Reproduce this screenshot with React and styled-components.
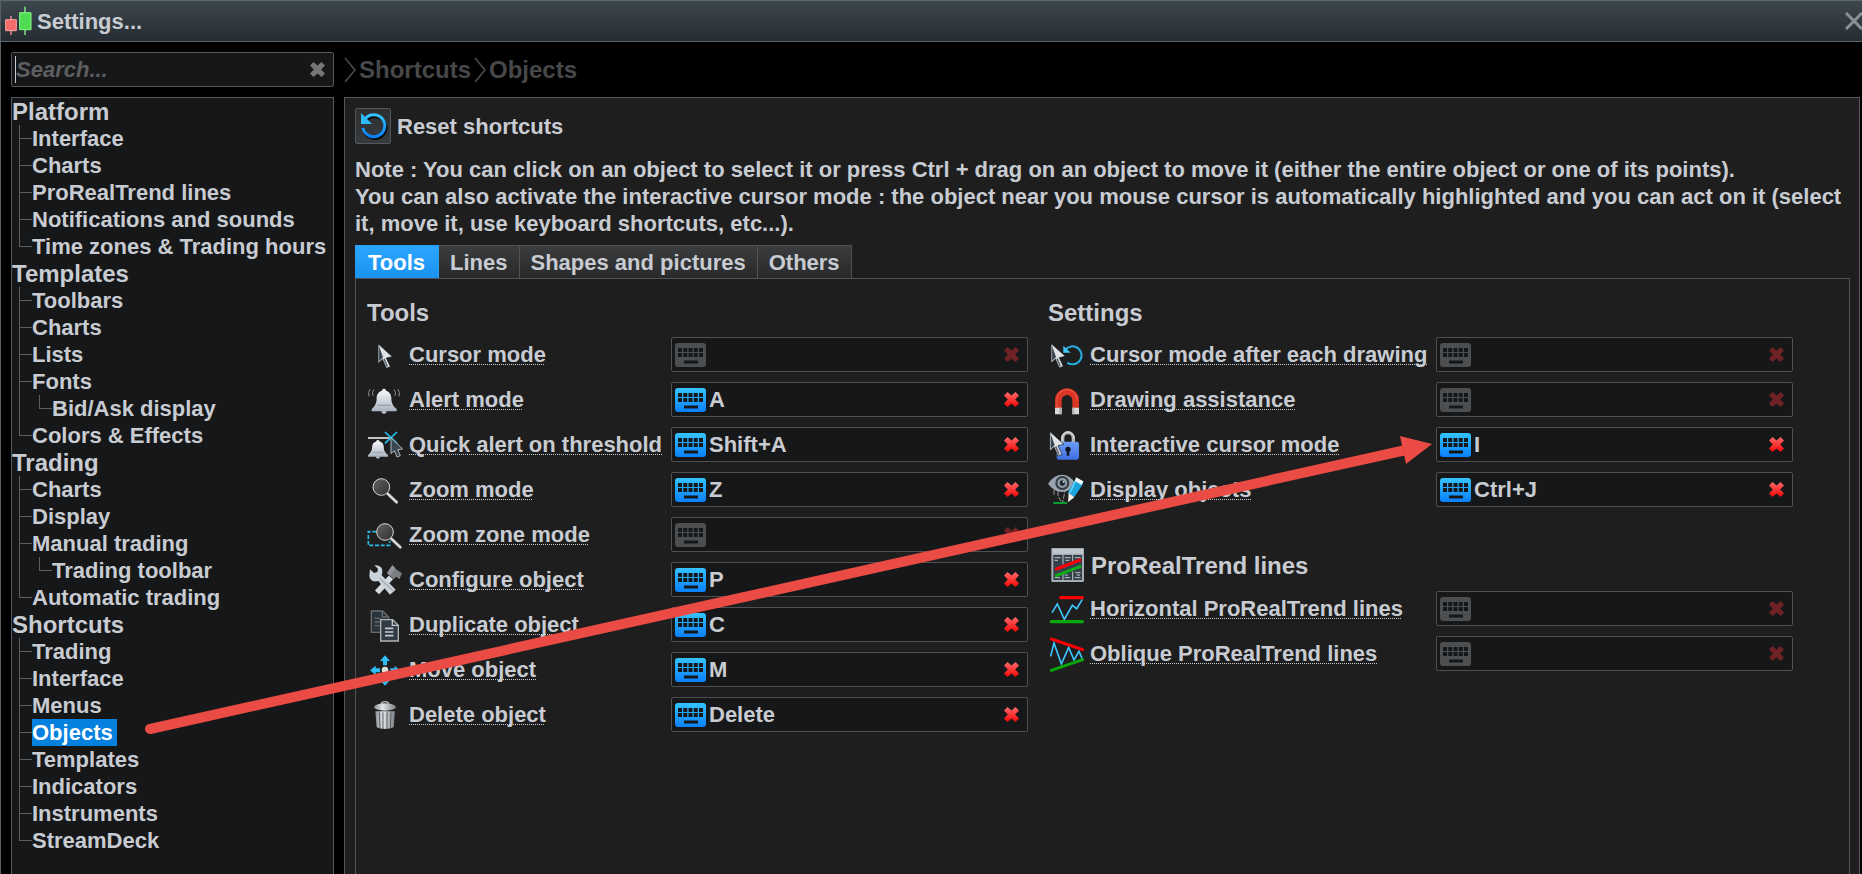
import React, { useState } from 'react'
import styled, { createGlobalStyle } from 'styled-components'

const GlobalStyle = createGlobalStyle`
  * {
    box-sizing: border-box;
  }

  body {
    margin: 0;
    background: #000;
    color: #c8ccd2;
    font-family: 'Liberation Sans', Arial, sans-serif;
    font-size: 22px;
    font-weight: bold;
    line-height: 27px;
  }

  button, input {
    font: inherit;
    color: inherit;
  }
`

const Window = styled.div`
  position: relative;
  display: flex;
  flex-direction: column;
  height: 100vh;
  overflow: hidden;
  border-left: 1px solid #5a5f63;
`

const TitleBar = styled.header`
  display: flex;
  align-items: center;
  flex: none;
  height: 42px;
  padding-left: 3px;
  border-top: 1px solid #5d666d;
  border-bottom: 1px solid #5b6267;
  background: linear-gradient(#3d474e, #252d33);
`

const WindowTitle = styled.h1`
  flex: 1;
  margin: 0 0 0 3px;
  font-size: 22px;
`

const PlainButton = styled.button`
  display: flex;
  flex: none;
  padding: 0;
  border: none;
  background: none;
  cursor: pointer;
`

const Body = styled.div`
  display: grid;
  grid-template-columns: 323px 1fr;
  grid-template-rows: 35px 1fr;
  gap: 10px;
  flex: 1;
  min-height: 0;
  padding: 10px 2px 0 10px;
`

const SearchBox = styled.div`
  display: flex;
  align-items: center;
  padding: 0 7px 0 3px;
  border: 1px solid #55585a;
  border-radius: 2px;
  background: #161718;
`

const SearchInput = styled.input`
  flex: 1;
  min-width: 0;
  height: 27px;
  padding: 0;
  border: none;
  border-left: 1px solid #c8ccd2;
  outline: none;
  background: none;

  &::placeholder {
    color: #5c5e60;
    font-style: italic;
    opacity: 1;
  }
`

const Breadcrumb = styled.nav`
  display: flex;
  align-items: center;
  gap: 3px;
`

const Crumb = styled.a`
  color: #46484a;
  font-size: 24px;
  text-decoration: none;
`

const Sidebar = styled.nav`
  border: 1px solid #55585a;
  border-bottom: none;
  background: #161718;
  overflow: hidden;
`

const GroupTitle = styled.h2`
  margin: 0;
  font-size: 24px;
  line-height: 27px;
`

const Branch = styled.ul`
  margin: 0 0 0 7px;
  padding: 0;
  list-style: none;
`

// the connector lines are painted as two backgrounds on each item
const Leaf = styled.li`
  padding-left: 13px;
  background-image: linear-gradient(#5d5f61, #5d5f61), linear-gradient(#5d5f61, #5d5f61);
  background-repeat: no-repeat;
  background-position: 0 0, 0 13px;
  background-size: 1px 100%, 13px 1px;

  &:last-child {
    background-size: 1px 13px, 13px 1px;
  }
`

const LeafLink = styled.a`
  display: block;
  width: fit-content;
  padding-right: 4px;
  color: ${props => props.$active ? '#fff' : 'inherit'};
  background: ${props => props.$active ? '#0480df' : 'none'};
  text-decoration: none;
  white-space: nowrap;
`

const Content = styled.main`
  display: flex;
  flex-direction: column;
  padding: 10px 9px 0 10px;
  border: 1px solid #55585a;
  border-bottom: none;
  background: #1e1e1e;
  overflow: hidden;
`

const ResetRow = styled.div`
  display: flex;
  align-items: center;
  gap: 6px;
`

const ResetButton = styled.button`
  display: flex;
  padding: 0;
  border: 1px solid #55585a;
  border-radius: 2px;
  background: linear-gradient(#2d2f30, #373a3d);
  cursor: pointer;
`

const Note = styled.p`
  margin: 12px 0 8px;
`

const TabList = styled.div`
  display: flex;
`

const Tab = styled.button`
  height: 33px;
  padding: 0 ${props => props.$active ? '13px' : '11px'};
  border: solid ${props => props.$active ? '#2b9ff8' : '#505254'};
  border-width: 1px 1px 0 0;
  background: ${props => props.$active ? 'linear-gradient(#2ba6ff, #1a93f0)' : 'linear-gradient(#3b3c3e, #28292b)'};
  color: ${props => props.$active ? '#fff' : 'inherit'};
  cursor: pointer;
`

const TabPanel = styled.div`
  display: grid;
  grid-template-columns: auto 1fr;
  column-gap: 20px;
  flex: 1;
  padding: 20px 11px 0;
  border: 1px solid #505254;
  border-bottom: none;
`

const Section = styled.section`
  margin-bottom: 35px;
`

const SectionTitle = styled.h3`
  display: flex;
  align-items: center;
  gap: 7px;
  height: ${props => props.$tall ? '36px' : '27px'};
  margin: 0 0 ${props => props.$tall ? '3px' : '6px'};
  font-size: 24px;
`

const Row = styled.div`
  display: grid;
  grid-template-columns: 36px ${props => props.$wide ? '340px' : '256px'} 357px;
  column-gap: 6px;
  align-items: center;
  height: 45px;
`

const RowLabel = styled.label`
  white-space: nowrap;
  text-decoration: underline dotted 1px;
  text-decoration-skip-ink: none;
  text-underline-offset: 2px;
`

const Field = styled.div`
  display: flex;
  align-items: center;
  gap: 3px;
  height: 35px;
  padding: 0 7px 0 3px;
  border: 1px solid #4e5052;
  border-radius: 2px;
  background: #161718;
`

const KeyInput = styled.input`
  flex: 1;
  min-width: 0;
  padding: 0;
  border: none;
  outline: none;
  background: none;
`

const ArrowOverlay = styled.svg`
  position: absolute;
  left: 0;
  top: 0;
  pointer-events: none;
`

const Icon = ({ children }) => (
  <svg width="36" height="36" viewBox="0 0 108 108" fill="none" aria-hidden="true">{children}</svg>
)

const Gradients = () => (
  <svg width="0" height="0" style={{ position: 'absolute' }} aria-hidden="true">
    <defs>
      <linearGradient id="blue" x1="0" y1="0" x2="0" y2="1"><stop offset="0" stopColor="#35c3ff" /><stop offset="1" stopColor="#0a80fb" /></linearGradient>
      <linearGradient id="red" x1="0" y1="0" x2="0" y2="1"><stop offset="0" stopColor="#ff6a6a" /><stop offset="1" stopColor="#f50505" /></linearGradient>
      <linearGradient id="silver" x1="0" y1="0" x2="0" y2="1"><stop offset="0" stopColor="#fbfcff" /><stop offset="1" stopColor="#a9b4c0" /></linearGradient>
      <linearGradient id="lens" x1="0" y1="0" x2="1" y2="1"><stop offset="0" stopColor="#636363" /><stop offset="1" stopColor="#303030" /></linearGradient>
      <linearGradient id="can" x1="0" y1="0" x2="1" y2="0"><stop offset="0" stopColor="#8b9096" /><stop offset="0.4" stopColor="#e3e6e9" /><stop offset="1" stopColor="#777d83" /></linearGradient>
      <linearGradient id="lock" x1="0" y1="0" x2="0" y2="1"><stop offset="0" stopColor="#6d9cf8" /><stop offset="1" stopColor="#3f6fe0" /></linearGradient>
    </defs>
  </svg>
)

const CursorShape = ({ x = 0, y = 0 }) => (
  <g transform={`translate(${x} ${y})`}>
    <path d="M0 0V57L12 46L24 73L36 68L24 42L42 38Z" fill="#dfe3e8" stroke="#12161a" strokeWidth="2" />
    <path d="M2 6V52L12 42L14 40Z" fill="#3b4650" />
    <path d="M15 46L25 69L29 67L19 43Z" fill="#59636d" />
    <path d="M1 3V55L12 44" stroke="#aab3bb" strokeWidth="2" />
  </g>
)

const BellShape = () => (
  <g>
    <path d="M44 86H58V93L51 96L44 93Z" fill="#aeb8c3" />
    <path d="M51 20C46 20 45 24 45 26C34 29 29 38 29 48C29 62 26 70 14 81V88H89V81C76 70 73 62 73 48C73 38 68 29 57 26C57 24 56 20 51 20Z" fill="url(#silver)" />
    <path d="M32 70H70" stroke="#8794a2" strokeWidth="3" />
  </g>
)

const Lens = ({ x }) => (
  <g transform={`translate(${x} 0)`}>
    <path d="M62 65L89 91" stroke="#d9d9d6" strokeWidth="8" strokeLinecap="round" />
    <circle cx="43" cy="45" r="25" fill="url(#lens)" stroke="#d6d6d4" strokeWidth="3" />
  </g>
)

const icons = {
  cursor: <CursorShape x={34} y={21} />,
  alert: (
    <>
      <BellShape />
      <path d="M9 22Q2 31 6 43M20 23Q14 31 18 41M93 22Q100 31 96 43M82 23Q88 31 84 41" stroke="#8c959e" strokeWidth="3" />
    </>
  ),
  quick: (
    <>
      <path d="M3 33H68" stroke="#e5e5e5" strokeWidth="5" />
      <g transform="translate(-8 24) scale(0.8 0.74)"><BellShape /></g>
      <path d="M54 15L90 49M90 15L54 49" stroke="#22c3f3" strokeWidth="5" />
      <path d="M72 32V80L82 71L90 90L100 86L92 68L107 66Z" fill="#3a4650" stroke="#aeb7bf" strokeWidth="3" />
    </>
  ),
  zoom: <Lens x={0} />,
  zone: (
    <>
      <path d="M28 44H4V85H68V72" stroke="#27b8e2" strokeWidth="5" strokeDasharray="12 5" />
      <Lens x={11} />
    </>
  ),
  configure: (
    <>
      <path d="M30 91L72 46" stroke="#d4dbe1" strokeWidth="17" />
      <path d="M60 33L76 10L90 24L105 34L97 52L88 44L80 52Z" fill="#7a7e83" />
      <path d="M60 33L76 10L84 18L70 41Z" fill="#92969a" />
      <path d="M11 15L23 26L33 23L35 13L24 3Q42 2 47 14Q50 24 46 33L88 76L71 91L36 50Q12 56 9 35Z" transform="translate(-2 7)" fill="#cbd3da" />
      <path d="M38 49L80 88" stroke="#8c949c" strokeWidth="3" />
    </>
  ),
  duplicate: (
    <>
      <path d="M13 12H47L65 30V76H13Z" fill="#2b333a" stroke="#666d72" strokeWidth="4" />
      <path d="M46 12V30H64M23 34H40M23 45H38M23 56H38" stroke="#666d72" strokeWidth="4" />
      <path d="M41 38H77L94 55V102H41Z" fill="#303b45" stroke="#aeb4b8" strokeWidth="4" />
      <path d="M76 39V55H93" stroke="#c5cacd" strokeWidth="4" />
      <path d="M54 64H79M54 75H79M54 86H79" stroke="#c5cacd" strokeWidth="5" />
    </>
  ),
  move: (
    <>
      <path d="M54 10L69 27H60V40H48V27H39ZM54 101L69 85H60V70H48V85H39ZM9 55L26 41V49H39V61H26V69ZM99 55L83 41V49H70V61H83V69Z" fill="#30bdf8" />
      <circle cx="54" cy="54" r="10" fill="#deded8" />
    </>
  ),
  trash: (
    <>
      <path d="M43 22Q43 14 54 14Q65 14 65 22" stroke="#b9bec3" strokeWidth="4" />
      <ellipse cx="54" cy="30" rx="33" ry="11" fill="url(#can)" />
      <path d="M25 43H84L80 91Q54 101 29 91Z" fill="url(#can)" />
      <path d="M37 46L39 94M48 46V96M60 46V96M72 46L70 94" stroke="#565c62" strokeWidth="3" />
    </>
  ),
  after: (
    <>
      <path d="M52 39A27 27 0 1 1 58 77" stroke="#25afe0" strokeWidth="6" />
      <path d="M46 26V47H68Z" fill="#3cc8f6" />
      <CursorShape x={10} y={20} />
    </>
  ),
  magnet: (
    <>
      <path d="M31 78V55A26 26 0 0 1 83 55V78" stroke="#d93525" strokeWidth="20" />
      <path d="M27 76V53A30 30 0 0 1 87 53" stroke="#ee5a45" strokeWidth="3" />
      <path d="M21 77H41V97H21ZM73 77H93V97H73Z" fill="#d9d9d9" />
      <path d="M33 77H41V97H33ZM73 77H79V97H73Z" fill="#b6b6b6" />
    </>
  ),
  interactive: (
    <>
      <path d="M44 48V34A16 17 0 0 1 76 34V48" stroke="#b7b7b7" strokeWidth="10" />
      <path d="M42 44V34A18 19 0 0 1 78 34" stroke="#e2e2e2" strokeWidth="3" />
      <rect x="26" y="44" width="67" height="54" rx="7" fill="url(#lock)" />
      <circle cx="60" cy="67" r="8" fill="#101522" />
      <path d="M56 69H64V86H56Z" fill="#101522" />
      <CursorShape x={6} y={14} />
    </>
  ),
  display: (
    <>
      <path d="M18 54V72M30 58V72L43 94L51 58" stroke="#999" strokeWidth="3" strokeDasharray="14 4" />
      <path d="M0 35Q18 8 42 8Q66 8 83 35Q65 60 42 60Q18 60 0 35Z" fill="#98a3af" />
      <circle cx="43" cy="33" r="21" fill="#333b43" />
      <circle cx="43" cy="33" r="15" fill="#8f9ba8" />
      <circle cx="43" cy="33" r="8" fill="#222a31" />
      <circle cx="47" cy="29" r="3" fill="#dce3ea" />
      <path d="M16 93H57" stroke="#0b9f32" strokeWidth="6" />
      <path d="M84 19L106 31L103 39L79 75L59 62Z" fill="#1aa5dc" />
      <path d="M84 24L66 62" stroke="#63d1f7" strokeWidth="5" />
      <path d="M84 16L106 28L101 39L81 27Z" fill="#f4fafc" />
      <path d="M62 62L79 76L60 91Z" fill="#f1f1e8" />
    </>
  ),
  trend: (
    <>
      <rect x="10" y="3" width="98" height="102" rx="3" fill="#a4acb4" />
      <path d="M13 6H105V20H13Z" fill="#c0c7cd" />
      <path d="M16 24H102V99H16Z" fill="#35404a" />
      <path d="M45 24V52M45 78V99M74 24V42M74 74V99M20 32H38M20 40H30M50 32H68M52 40H64M80 32H98M20 92H36M50 92H66M50 84H60M82 77H98M80 92H98M86 84H96" stroke="#c0c7cd" strokeWidth="3" />
      <path d="M25 66L96 39" stroke="#fb0007" strokeWidth="9" strokeLinecap="round" />
      <path d="M25 86L96 59" stroke="#0bae15" strokeWidth="9" strokeLinecap="round" />
    </>
  ),
  horizontal: (
    <>
      <path d="M12 65L28 39L49 85L73 43L86 53L103 25" stroke="#3cc4fb" strokeWidth="5" />
      <path d="M38 20H103" stroke="#fb0004" strokeWidth="10" strokeLinecap="round" />
      <path d="M10 92H103" stroke="#0aa80a" strokeWidth="10" strokeLinecap="round" />
    </>
  ),
  oblique: (
    <>
      <path d="M8 61L18 21L40 84L62 34L78 72L93 46L103 69" stroke="#3cc4fb" strokeWidth="5" />
      <path d="M10 9L104 41" stroke="#fb0004" strokeWidth="9" strokeLinecap="round" />
      <path d="M10 103L104 71" stroke="#0aa80a" strokeWidth="9" strokeLinecap="round" />
    </>
  ),
}

const Logo = () => (
  <svg width="30" height="30" viewBox="0 0 90 90" aria-hidden="true">
    <path d="M21 30V87" stroke="#ff9c9c" strokeWidth="4" />
    <path d="M5 41H37V74H5Z" fill="#f46b6b" stroke="#ffa0a0" strokeWidth="3" />
    <path d="M63 2V87" stroke="#8dff8d" strokeWidth="4" />
    <path d="M47 20H81V71H47Z" fill="#4fdc52" stroke="#86f786" strokeWidth="3" />
  </svg>
)

const Cross = ({ fill }) => (
  <svg width="17" height="17" viewBox="0 0 17 17" aria-hidden="true">
    <path d="M4.5 1L8.500 4.600L12.500 1L16 4.500L12.200 8.500L16 12.500L12.500 16L8.500 12.400L4.500 16L1 12.500L4.800 8.500L1 4.500Z" fill={fill} />
  </svg>
)

const Chevron = () => (
  <svg width="12" height="26" viewBox="0 0 12 26" fill="none" aria-hidden="true">
    <path d="M1 1L11 13L1 25" stroke="#4c4e50" strokeWidth="1.500" />
  </svg>
)

const Keyboard = ({ on }) => (
  <svg width="31" height="24" viewBox="0 0 31 24" aria-hidden="true">
    <rect width="31" height="24" rx="3" fill={on ? 'url(#blue)' : '#4d4e50'} />
    <path d="M3 7H28M3 12H28" stroke="#15181b" strokeWidth="4" strokeDasharray="4 1.250" />
    <path d="M9 19H23" stroke="#15181b" strokeWidth="3" />
  </svg>
)

const tree = [
  { title: 'Platform', items: ['Interface', 'Charts', 'ProRealTrend lines', 'Notifications and sounds', 'Time zones & Trading hours'] },
  { title: 'Templates', items: ['Toolbars', 'Charts', 'Lists', ['Fonts', 'Bid/Ask display'], 'Colors & Effects'] },
  { title: 'Trading', items: ['Charts', 'Display', ['Manual trading', 'Trading toolbar'], 'Automatic trading'] },
  { title: 'Shortcuts', items: ['Trading', 'Interface', 'Menus', 'Objects', 'Templates', 'Indicators', 'Instruments', 'StreamDeck'] },
]

const toolRows = [
  { id: 'cursor', label: 'Cursor mode', value: '' },
  { id: 'alert', label: 'Alert mode', value: 'A' },
  { id: 'quick', label: 'Quick alert on threshold', value: 'Shift+A' },
  { id: 'zoom', label: 'Zoom mode', value: 'Z' },
  { id: 'zone', label: 'Zoom zone mode', value: '' },
  { id: 'configure', label: 'Configure object', value: 'P' },
  { id: 'duplicate', label: 'Duplicate object', value: 'C' },
  { id: 'move', label: 'Move object', value: 'M' },
  { id: 'trash', label: 'Delete object', value: 'Delete' },
]

const settingRows = [
  { id: 'after', label: 'Cursor mode after each drawing', value: '' },
  { id: 'magnet', label: 'Drawing assistance', value: '' },
  { id: 'interactive', label: 'Interactive cursor mode', value: 'I' },
  { id: 'display', label: 'Display objects', value: 'Ctrl+J' },
]

const trendRows = [
  { id: 'horizontal', label: 'Horizontal ProRealTrend lines', value: '' },
  { id: 'oblique', label: 'Oblique ProRealTrend lines', value: '' },
]

const tabs = ['Tools', 'Lines', 'Shapes and pictures', 'Others']

const TreeItem = ({ item, selected, onSelect }) => {
  const [name, child] = Array.isArray(item) ? item : [item]
  return (
    <Leaf>
      <LeafLink href="#" $active={selected === name} onClick={() => onSelect(name)}>{name}</LeafLink>
      {child && (
        <Branch>
          <TreeItem item={child} selected={selected} onSelect={onSelect} />
        </Branch>
      )}
    </Leaf>
  )
}

const ShortcutRow = ({ row, wide }) => {
  const [value, setValue] = useState(row.value)
  return (
    <Row $wide={wide}>
      <Icon>{icons[row.id]}</Icon>
      <div><RowLabel htmlFor={row.id}>{row.label}</RowLabel></div>
      <Field>
        <Keyboard on={value !== ''} />
        <KeyInput id={row.id} value={value} onChange={e => setValue(e.target.value)} />
        <PlainButton type="button" aria-label="Clear" onClick={() => setValue('')}>
          <Cross fill={value ? 'url(#red)' : '#6e2226'} />
        </PlainButton>
      </Field>
    </Row>
  )
}

const App = () => {
  const [search, setSearch] = useState('')
  const [selected, setSelected] = useState('Objects')
  const [tab, setTab] = useState('Tools')

  return (
    <Window>
      <GlobalStyle />
      <Gradients />
      <TitleBar>
        <Logo />
        <WindowTitle>Settings...</WindowTitle>
        <PlainButton type="button" aria-label="Close">
          <svg width="17" height="18" viewBox="0 0 17 18" aria-hidden="true">
            <path d="M1 1L17 17M17 1L1 17" stroke="#8b9196" strokeWidth="3" />
          </svg>
        </PlainButton>
      </TitleBar>
      <Body>
        <SearchBox>
          <SearchInput aria-label="Search" placeholder="Search..." value={search} onChange={e => setSearch(e.target.value)} />
          <PlainButton type="button" aria-label="Clear search" onClick={() => setSearch('')}>
            <Cross fill="#747677" />
          </PlainButton>
        </SearchBox>
        <Breadcrumb aria-label="Breadcrumb">
          <Chevron />
          <Crumb href="#">Shortcuts</Crumb>
          <Chevron />
          <Crumb href="#">Objects</Crumb>
        </Breadcrumb>
        <Sidebar aria-label="Settings pages">
          {tree.map(group => (
            <div key={group.title}>
              <GroupTitle>{group.title}</GroupTitle>
              <Branch>
                {group.items.map(item => (
                  <TreeItem key={item} item={item} selected={selected} onSelect={setSelected} />
                ))}
              </Branch>
            </div>
          ))}
        </Sidebar>
        <Content>
          <ResetRow>
            <ResetButton id="reset" type="button" aria-labelledby="reset-label">
              <svg width="34" height="34" viewBox="0 0 34 34" fill="none" aria-hidden="true">
                <path d="M9 11A11 11 0 1 1 7 19" stroke="#080a0c" strokeWidth="3" transform="translate(1 1)" />
                <path d="M9 10A11 11 0 1 1 7 19" stroke="url(#blue)" strokeWidth="3" />
                <path d="M5 4V15H16Z" fill="#2db8f8" />
              </svg>
            </ResetButton>
            <label id="reset-label" htmlFor="reset">Reset shortcuts</label>
          </ResetRow>
          <Note>
            Note : You can click on an object to select it or press Ctrl + drag on an object to move it (either the entire object or one of its points).
            <br />
            You can also activate the interactive cursor mode : the object near you mouse cursor is automatically highlighted and you can act on it (select it, move it, use keyboard shortcuts, etc...).
          </Note>
          <TabList role="tablist">
            {tabs.map(name => (
              <Tab key={name} type="button" role="tab" aria-selected={tab === name} $active={tab === name} onClick={() => setTab(name)}>{name}</Tab>
            ))}
          </TabList>
          <TabPanel role="tabpanel">
            <div>
              <SectionTitle>Tools</SectionTitle>
              {toolRows.map(row => <ShortcutRow key={row.id} row={row} />)}
            </div>
            <div>
              <Section>
                <SectionTitle>Settings</SectionTitle>
                {settingRows.map(row => <ShortcutRow key={row.id} row={row} wide />)}
              </Section>
              <Section>
                <SectionTitle $tall>
                  <Icon>{icons.trend}</Icon>
                  ProRealTrend lines
                </SectionTitle>
                {trendRows.map(row => <ShortcutRow key={row.id} row={row} wide />)}
              </Section>
            </div>
          </TabPanel>
        </Content>
      </Body>
      <ArrowOverlay width="1500" height="800" fill="none" aria-hidden="true">
        <path d="M149 729L1405 450" stroke="#ea4b44" strokeWidth="10" strokeLinecap="round" />
        <path d="M1399 436L1431 444L1405 464Z" fill="#ea4b44" />
      </ArrowOverlay>
    </Window>
  )
}

export default App
